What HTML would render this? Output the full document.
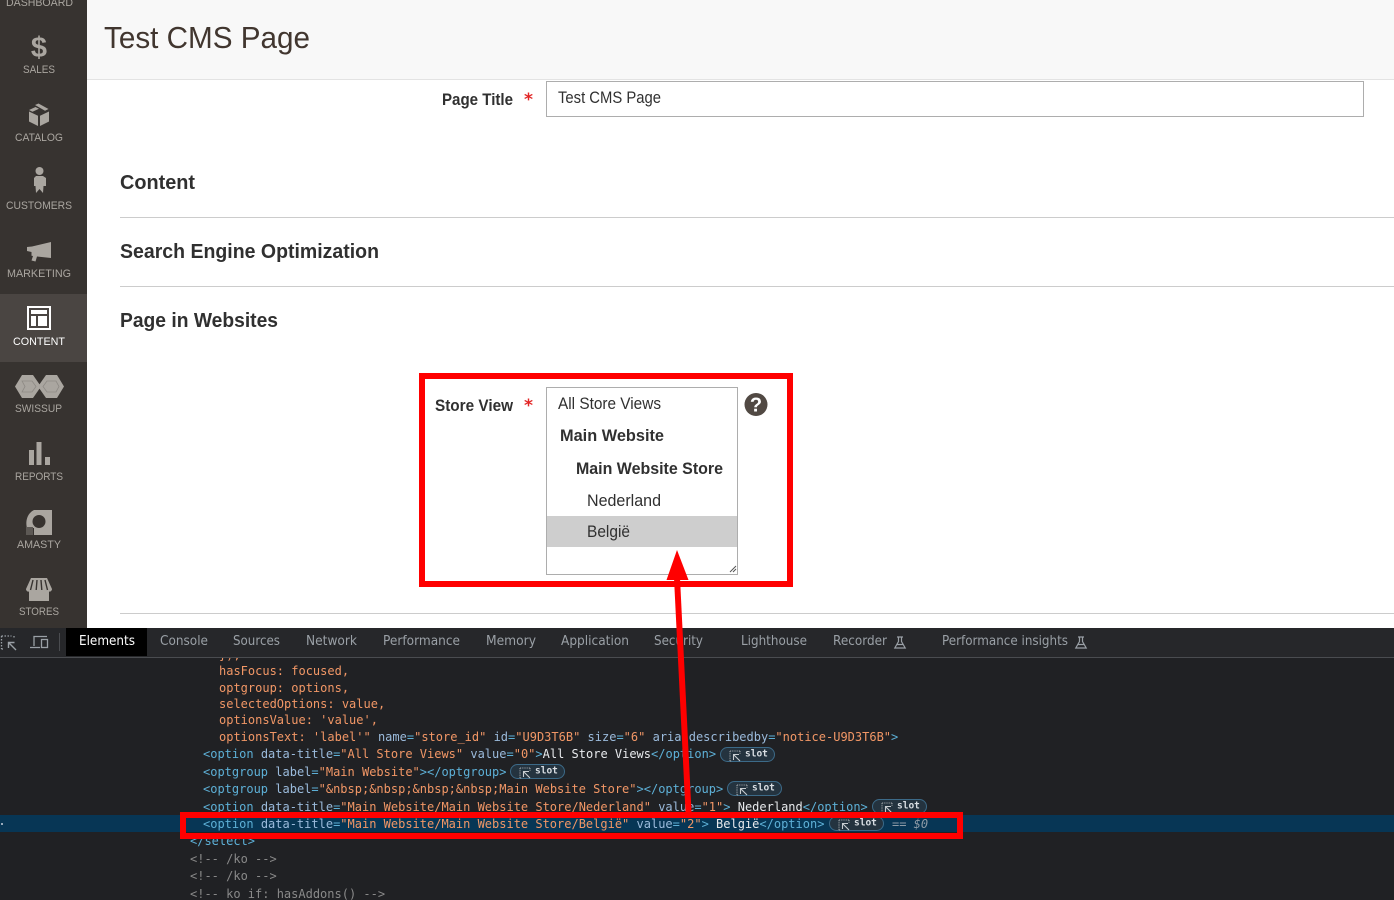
<!DOCTYPE html>
<html lang="en"><head><meta charset="utf-8"><title>Test CMS Page</title>
<style>
html,body{margin:0;padding:0;background:#fff;width:1394px;height:900px;overflow:hidden}
svg{display:block;position:absolute;left:0;top:0}
.s{font:11px "Liberation Sans",sans-serif;fill:#aaa6a0}
.u{font:17px "Liberation Sans",sans-serif;fill:#303030}
.b{font:bold 16.500px "Liberation Sans",sans-serif;fill:#303030}
.h{font:bold 20.500px "Liberation Sans",sans-serif;fill:#303030}
.t{font:13px "DejaVu Sans",sans-serif;fill:#9aa0a6}
.m{font:12px "DejaVu Sans Mono",monospace;fill:#5db0d7}
.o{fill:#f29766}.n{fill:#9bbbdc}.w{fill:#e8eaed}.g{fill:#898989}.k{fill:#5db0d7}
.sl{font:bold 9.500px "DejaVu Sans Mono",monospace;fill:#d8dde2}
</style></head><body>
<svg width="1394" height="900" viewBox="0 0 1394 900" xmlns="http://www.w3.org/2000/svg">
<defs>
<g id="slot">
<rect x="0.5" y="0.5" width="54" height="14" rx="7" fill="#24333f" stroke="#3c6a88"/>
<path d="M10 4h10M10 4v10M20 4v3M10 14h2" stroke="#9a9fa4" stroke-width="1.100" stroke-dasharray="1.200 1" fill="none"/>
<path d="M20 14l-6-6M13.500 13V7.500h5.500" stroke="#c8ccd0" stroke-width="1.100" fill="none"/>
<text x="25" y="9.500" class="sl">slot</text>
</g>
<g id="flask"><path d="M3 .5h6M4.500 .5v4.500L.8 11.500h10.400L7.500 5V.5M3 8h6" fill="none" stroke="#9aa0a6" stroke-width="1.200"/></g>
</defs>

<!-- page -->
<rect width="1394" height="900" fill="#fff"/>
<rect x="87" width="1307" height="79" fill="#f8f8f8"/>
<rect x="87" y="79" width="1307" height="1" fill="#e3e3e3"/>
<text x="104" y="48" textLength="206" lengthAdjust="spacingAndGlyphs" style="font:31px 'Liberation Sans',sans-serif;fill:#41362f">Test CMS Page</text>

<text x="442" y="105" textLength="71" lengthAdjust="spacingAndGlyphs" class="b">Page Title</text>
<text x="524" y="105" textLength="9" lengthAdjust="spacingAndGlyphs" style="font:bold 17px 'DejaVu Sans',sans-serif;fill:#e22626">*</text>
<rect x="546.500" y="81.500" width="817" height="35" fill="#fff" stroke="#adadad"/>
<text x="558" y="103" textLength="103" lengthAdjust="spacingAndGlyphs" class="u">Test CMS Page</text>

<text x="120" y="189" textLength="75" lengthAdjust="spacingAndGlyphs" class="h">Content</text>
<rect x="120" y="217" width="1274" height="1" fill="#cccccc"/>
<text x="120" y="258" textLength="259" lengthAdjust="spacingAndGlyphs" class="h">Search Engine Optimization</text>
<rect x="120" y="286" width="1274" height="1" fill="#cccccc"/>
<text x="120" y="327" textLength="158" lengthAdjust="spacingAndGlyphs" class="h">Page in Websites</text>
<rect x="120" y="613" width="1274" height="1" fill="#cccccc"/>

<text x="435" y="411" textLength="78" lengthAdjust="spacingAndGlyphs" class="b">Store View</text>
<text x="524" y="411" textLength="9" lengthAdjust="spacingAndGlyphs" style="font:bold 17px 'DejaVu Sans',sans-serif;fill:#e22626">*</text>
<rect x="546.500" y="387.500" width="191" height="187" fill="#fff" stroke="#adadad"/>
<rect x="547" y="516" width="190" height="31" fill="#cecece"/>
<text x="558" y="409" textLength="103" lengthAdjust="spacingAndGlyphs" class="u">All Store Views</text>
<text x="560" y="441" textLength="104" lengthAdjust="spacingAndGlyphs" class="b">Main Website</text>
<text x="576" y="474" textLength="147" lengthAdjust="spacingAndGlyphs" class="b">Main Website Store</text>
<text x="587" y="506" textLength="74" lengthAdjust="spacingAndGlyphs" class="u">Nederland</text>
<text x="587" y="537" textLength="43" lengthAdjust="spacingAndGlyphs" class="u">België</text>
<path d="M730 572l6-6M733 572l3-3" stroke="#555" stroke-width="1"/>
<circle cx="756" cy="404.500" r="11.500" fill="#514943"/>
<text x="756" y="411.500" text-anchor="middle" style="font:bold 20px 'Liberation Sans',sans-serif;fill:#fff">?</text>

<!-- sidebar -->
<rect width="87" height="628" fill="#373330"/>
<rect y="294" width="87" height="68" fill="#4a4542"/>
<text x="6" y="6" textLength="67" lengthAdjust="spacingAndGlyphs" class="s">DASHBOARD</text>
<text x="39" y="57" text-anchor="middle" style="font:bold 29px 'Liberation Sans',sans-serif;fill:#aaa6a0">$</text>
<text x="23" y="73" textLength="32" lengthAdjust="spacingAndGlyphs" class="s">SALES</text>
<path d="M29 110l6.500-3 3.500 1.800-6.500 3zM35 105l3.500-1.500 10 5.500-3.500 1.800zM29 111.500l9 4.300v10.200l-9-4.500zM40 115.800l9-4.300v10l-9 4.500z" fill="#aaa6a0"/>
<text x="15" y="141" textLength="48" lengthAdjust="spacingAndGlyphs" class="s">CATALOG</text>
<circle cx="39.500" cy="171" r="4" fill="#aaa6a0"/>
<path d="M36 176h7l3 2v8h-2.500l-.5 7-3.500-4-3.500 4-.5-7H34v-8z" fill="#aaa6a0"/>
<text x="6" y="209" textLength="66" lengthAdjust="spacingAndGlyphs" class="s">CUSTOMERS</text>
<path d="M27 247l5-.5 19-4.500v16l-14-1.500-1.500 5-4-1 1.500-4.500-1.500-.3V252l-4.500-1z" fill="#aaa6a0"/>
<text x="7" y="277" textLength="64" lengthAdjust="spacingAndGlyphs" class="s">MARKETING</text>
<rect x="28" y="307" width="22" height="22" fill="none" stroke="#fff" stroke-width="2"/>
<path d="M31 310h16v4H31zM31 316h5v10h-5zM38 316h9v10h-9z" fill="#fff"/>
<text x="13" y="345" textLength="52" lengthAdjust="spacingAndGlyphs" class="s" style="fill:#fff">CONTENT</text>
<path d="M15 386.500L22 375H33L41 386.500 33 398H22zM38 386.500L46 375H57L64 386.500 57 398H46z" fill="#aaa6a0"/>
<path d="M22 381h10l4 5.500-4 5.500H22l3-5.500zM47 381h9l3 5.500-3 5.500h-9l-4-5.500z" fill="none" stroke="#8e8a85" stroke-width=".8"/>
<text x="15" y="412" textLength="47" lengthAdjust="spacingAndGlyphs" class="s">SWISSUP</text>
<path d="M29 450h5v15h-5zM36.500 442h5v23h-5zM45 457h5v8h-5z" fill="#aaa6a0"/>
<text x="15" y="480" textLength="48" lengthAdjust="spacingAndGlyphs" class="s">REPORTS</text>
<path d="M34 510h18v25H34z M27 528c-2-8 1-15 7-18v18z" fill="#aaa6a0"/>
<circle cx="39" cy="521.500" r="6.500" fill="#373330"/>
<rect x="26" y="527" width="7" height="8" fill="#5d5955"/>
<text x="17" y="548" textLength="44" lengthAdjust="spacingAndGlyphs" class="s">AMASTY</text>
<path d="M31 578h16l5 11c0 2-2 3-3 2.500v9.500H29v-9.500c-1 .5-3-.5-3-2.500z" fill="#aaa6a0"/>
<path d="M33 580l-2.500 10M37 580l-.8 10M41 580l.8 10M45 580l2.500 10" stroke="#373330" stroke-width="1.400"/>
<text x="19" y="615" textLength="40" lengthAdjust="spacingAndGlyphs" class="s">STORES</text>

<!-- devtools code -->
<rect y="657" width="1394" height="243" fill="#202124"/>
<rect y="815" width="1394" height="17" fill="#073655"/>
<rect x="1" y="823" width="2" height="2" fill="#9ab"/>
<g class="m">
<text x="219" y="659" class="o">}),</text>
<text x="219" y="675" class="o">hasFocus: focused,</text>
<text x="219" y="692" class="o">optgroup: options,</text>
<text x="219" y="708" class="o">selectedOptions: value,</text>
<text x="219" y="724" class="o">optionsValue: 'value',</text>
<text x="219" y="741" class="m"><tspan class="o">optionsText: 'label'"</tspan> <tspan class="n">name</tspan><tspan class="k">=</tspan><tspan class="o">"store_id"</tspan> <tspan class="n">id</tspan><tspan class="k">=</tspan><tspan class="o">"U9D3T6B"</tspan> <tspan class="n">size</tspan><tspan class="k">=</tspan><tspan class="o">"6"</tspan> <tspan class="n">aria-describedby</tspan><tspan class="k">=</tspan><tspan class="o">"notice-U9D3T6B"</tspan><tspan class="k">&gt;</tspan></text>
<text x="203" y="758" class="m"><tspan class="k">&lt;option</tspan> <tspan class="n">data-title</tspan><tspan class="k">=</tspan><tspan class="o">"All Store Views"</tspan> <tspan class="n">value</tspan><tspan class="k">=</tspan><tspan class="o">"0"</tspan><tspan class="k">&gt;</tspan><tspan class="w">All Store Views</tspan><tspan class="k">&lt;/option&gt;</tspan></text>
<text x="203" y="776" class="m"><tspan class="k">&lt;optgroup</tspan> <tspan class="n">label</tspan><tspan class="k">=</tspan><tspan class="o">"Main Website"</tspan><tspan class="k">&gt;&lt;/optgroup&gt;</tspan></text>
<text x="203" y="793" class="m"><tspan class="k">&lt;optgroup</tspan> <tspan class="n">label</tspan><tspan class="k">=</tspan><tspan class="o">"&amp;nbsp;&amp;nbsp;&amp;nbsp;&amp;nbsp;Main Website Store"</tspan><tspan class="k">&gt;&lt;/optgroup&gt;</tspan></text>
<text x="203" y="811" class="m"><tspan class="k">&lt;option</tspan> <tspan class="n">data-title</tspan><tspan class="k">=</tspan><tspan class="o">"Main Website/Main Website Store/Nederland"</tspan> <tspan class="n">value</tspan><tspan class="k">=</tspan><tspan class="o">"1"</tspan><tspan class="k">&gt;</tspan> <tspan class="w">Nederland</tspan><tspan class="k">&lt;/option&gt;</tspan></text>
<text x="203" y="828" class="m"><tspan class="k">&lt;option</tspan> <tspan class="n">data-title</tspan><tspan class="k">=</tspan><tspan class="o">"Main Website/Main Website Store/België"</tspan> <tspan class="n">value</tspan><tspan class="k">=</tspan><tspan class="o">"2"</tspan><tspan class="k">&gt;</tspan> <tspan class="w">België</tspan><tspan class="k">&lt;/option&gt;</tspan></text>
<text x="892" y="828" style="font:italic 12px 'DejaVu Sans Mono',monospace;fill:#8d9ba6">== $0</text>
<text x="190" y="845" class="k">&lt;/select&gt;</text>
<text x="190" y="863" class="g">&lt;!-- /ko --&gt;</text>
<text x="190" y="880" class="g">&lt;!-- /ko --&gt;</text>
<text x="190" y="898" class="g">&lt;!-- ko if: hasAddons() --&gt;</text>
</g>
<use href="#slot" x="720" y="747"/>
<use href="#slot" x="510" y="764"/>
<use href="#slot" x="727" y="781"/>
<use href="#slot" x="872" y="799"/>
<use href="#slot" x="829" y="816"/>

<!-- devtools tabs -->
<rect y="628" width="1394" height="29" fill="#26272a"/>
<rect y="657" width="1394" height="1" fill="#4a4c50"/>
<rect x="66" y="628" width="81" height="28" fill="#000"/>
<path d="M1.500 636h10M1.500 636v13M1.500 649h3M14 636v3" stroke="#9aa0a6" stroke-width="1.300" stroke-dasharray="1.500 1.500" fill="none"/>
<path d="M16 650l-7-7M8.500 648v-5.500h6" stroke="#9aa0a6" stroke-width="1.400" fill="none"/>
<path d="M34 646v-9.500h13M30 647.500h10" stroke="#9aa0a6" stroke-width="1.300" fill="none"/>
<rect x="41.500" y="639.500" width="6" height="8" fill="none" stroke="#9aa0a6" stroke-width="1.300"/>
<rect x="59" y="633" width="1" height="18" fill="#4a4c50"/>
<text x="79" y="645" textLength="56" lengthAdjust="spacingAndGlyphs" class="t" style="fill:#fff">Elements</text>
<text x="160" y="645" textLength="48" lengthAdjust="spacingAndGlyphs" class="t">Console</text>
<text x="233" y="645" textLength="47" lengthAdjust="spacingAndGlyphs" class="t">Sources</text>
<text x="306" y="645" textLength="51" lengthAdjust="spacingAndGlyphs" class="t">Network</text>
<text x="383" y="645" textLength="77" lengthAdjust="spacingAndGlyphs" class="t">Performance</text>
<text x="486" y="645" textLength="50" lengthAdjust="spacingAndGlyphs" class="t">Memory</text>
<text x="561" y="645" textLength="68" lengthAdjust="spacingAndGlyphs" class="t">Application</text>
<text x="654" y="645" textLength="49" lengthAdjust="spacingAndGlyphs" class="t">Security</text>
<text x="741" y="645" textLength="66" lengthAdjust="spacingAndGlyphs" class="t">Lighthouse</text>
<text x="833" y="645" textLength="54" lengthAdjust="spacingAndGlyphs" class="t">Recorder</text>
<use href="#flask" x="894" y="636.500"/>
<text x="942" y="645" textLength="126" lengthAdjust="spacingAndGlyphs" class="t">Performance insights</text>
<use href="#flask" x="1075" y="636.500"/>

<!-- annotations -->
<rect x="422" y="376" width="368" height="208" fill="none" stroke="#f00" stroke-width="6"/>
<rect x="183" y="815" width="777" height="21" fill="none" stroke="#f00" stroke-width="6"/>
<path d="M674 578h6l11.500 234h-6z" fill="#f00"/>
<path d="M677 550L688.500 580H666.500z" fill="#f00"/>
</svg>
</body></html>
